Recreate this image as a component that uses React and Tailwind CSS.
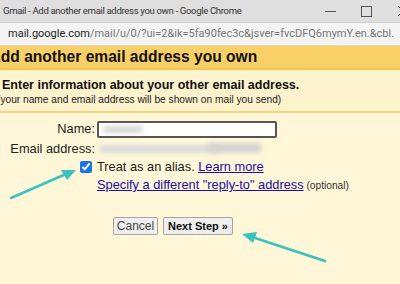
export default function App() {
  return (
    <div className="relative w-[400px] h-[284px] overflow-hidden bg-[#fff7d8]" style={{ fontFamily: '"Liberation Sans", Arial, sans-serif' }}>
      {/* Chrome title bar */}
      <div className="h-[23px] bg-[#dfdfdf] flex items-center justify-between pl-[3px] border-b border-[#cfcfcf] whitespace-nowrap" style={{ fontFamily: 'Roboto, "Noto Sans", sans-serif' }}>
        <span className="text-[9.6px] tracking-[-0.35px] text-[#333]">Gmail - Add another email address you own - Google Chrome</span>
        <div className="flex items-center gap-[25px] mr-[-9px]">
          <span className="block w-[11px] h-px bg-[#555]" />
          <span className="block w-[11px] h-[11px] border border-[#555]" />
          <svg width="12" height="12" viewBox="0 0 12 12"><path d="M1 1 L11 11 M11 1 L1 11" stroke="#555" strokeWidth="1" /></svg>
        </div>
      </div>
      {/* Address bar */}
      <div className="h-[22px] bg-[#f4f4f4] flex items-center pl-[8px] whitespace-nowrap overflow-hidden" style={{ fontFamily: 'Roboto, "Noto Sans", sans-serif' }}>
        <span className="text-[11px] text-[#222]">mail.google.com</span>
        <span className="text-[11px] text-[#777]">/mail/u/0/?ui=2&amp;ik=5fa90fec3c&amp;jsver=fvcDFQ6mymY.en.&amp;cbl.</span>
      </div>
      <div className="h-[1px] bg-[#e3d9b5]" />
      {/* Yellow header */}
      <div className="h-[24px] bg-[#f9d066] border-b-[2px] border-[#f0c453] flex items-center whitespace-nowrap overflow-hidden">
        <span className="ml-[-10.5px] text-[15.6px] font-bold text-[#111]">Add another email address you own</span>
      </div>
      {/* Info band */}
      <div className="h-[43px] bg-[#fff3cd] border-b-[2px] border-[#f5d57e] flex flex-col justify-center pt-[3px] whitespace-nowrap overflow-hidden">
        <span className="ml-[2px] text-[12.5px] font-bold text-[#111] leading-[15px]">Enter information about your other email address.</span>
        <span className="ml-[-3px] text-[10.2px] text-[#222] leading-[13px]">(your name and email address will be shown on mail you send)</span>
      </div>
      {/* Form */}
      <div className="pt-[7px] grid grid-cols-[95px_1fr] gap-x-[2px] items-center text-[12.8px] text-[#222]">
        <div className="text-right leading-[18px]">Name:</div>
        <div className="relative h-[17px] w-[180px] border-[2px] border-[#555] bg-white rounded-[2px]">
          <span className="absolute left-[4px] top-[3px] w-[40px] h-[7px] bg-[#d8d8d8] rounded-full blur-[2px]" />
        </div>
        <div className="text-right leading-[18px] mt-[2px]">Email address:</div>
        <div className="relative h-[18px] mt-[2px]">
          <span className="absolute left-[2px] top-[5px] w-[120px] h-[8px] bg-[#dcdcdc] rounded-full blur-[2px]" />
          <span className="absolute left-[110px] top-[3px] w-[55px] h-[10px] bg-[#d4d4d4] rounded-full blur-[2px]" />
        </div>
        <div className="flex justify-end items-center pr-[3px]">
          <input type="checkbox" checked readOnly className="w-[12px] h-[12px] m-0 accent-[#1a73e8]" />
        </div>
        <div className="leading-[18px] whitespace-nowrap">
          Treat as an alias. <a className="text-[#1a0dab] underline">Learn more</a>
        </div>
        <div />
        <div className="leading-[18px] whitespace-nowrap">
          <a className="text-[#1a0dab] underline">Specify a different "reply-to" address</a>
          <span className="text-[10.2px] text-[#333]"> (optional)</span>
        </div>
      </div>
      {/* Buttons */}
      <div className="flex gap-[5px] pl-[113px] mt-[22px]">
        <button className="h-[18px] w-[45px] bg-[#efefef] border border-[#a5a5a5] rounded-[2px] text-[12px] text-[#444] leading-none">Cancel</button>
        <button className="h-[18px] w-[70px] bg-[#efefef] border border-[#a5a5a5] rounded-[2px] text-[11px] font-bold text-[#111] leading-none">Next Step »</button>
      </div>
      {/* Arrows */}
      <svg className="absolute left-0 top-0 pointer-events-none" width="400" height="284" viewBox="0 0 400 284">
        <path d="M11 198 L66 174" stroke="#3cc1bf" strokeWidth="2.5" strokeLinecap="round" fill="none" />
        <path d="M76 170 L61 170 L67 180 Z" fill="#3cc1bf" />
        <path d="M325 261 L252 237" stroke="#3cc1bf" strokeWidth="2.5" strokeLinecap="round" fill="none" />
        <path d="M242 234 L257 232 L253 243 Z" fill="#3cc1bf" />
      </svg>
    </div>
  );
}
